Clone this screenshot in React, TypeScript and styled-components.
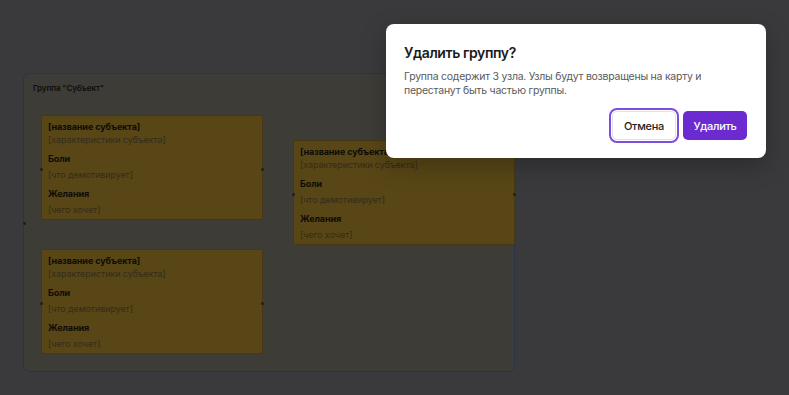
import styled, { createGlobalStyle } from "styled-components";

const GlobalStyle = createGlobalStyle`
  html, body, #root {
    margin: 0;
    padding: 0;
    width: 100%;
    height: 100%;
  }
  body {
    font-family: Inter, "Noto Sans", "Liberation Sans", sans-serif;
    overflow: hidden;
  }
`;

interface NodeData {
  x: number;
  y: number;
}

// positions of the nodes inside the group (canvas coordinates)
const nodes: NodeData[] = [
  { x: 17, y: 41 },
  { x: 269, y: 66 },
  { x: 17, y: 175 },
];

const SubjectCard = ({ x, y }: NodeData) => {
  return (
    <Card style={{ left: x, top: y }}>
      <CardTitle>[название субъекта]</CardTitle>
      <CardHint>[характеристики субъекта]</CardHint>
      <FieldLabel>Боли</FieldLabel>
      <CardHint>[что демотивирует]</CardHint>
      <FieldLabel>Желания</FieldLabel>
      <CardHint>[чего хочет]</CardHint>
      <Handle $side="left" />
      <Handle $side="right" />
    </Card>
  );
};

const App = () => {
  return (
    <>
      <GlobalStyle />
      <Canvas>
        <Group>
          <GroupLabel>Группа "Субъект"</GroupLabel>
          {nodes.map((n, i) => (
            <SubjectCard key={i} x={n.x} y={n.y} />
          ))}
          <GroupHandle />
        </Group>
        <Dialog>
          <DialogTitle>Удалить группу?</DialogTitle>
          <DialogText>
            Группа содержит 3 узла. Узлы будут возвращены на карту и
            перестанут быть частью группы.
          </DialogText>
          <Actions>
            <CancelButton>Отмена</CancelButton>
            <DeleteButton>Удалить</DeleteButton>
          </Actions>
        </Dialog>
      </Canvas>
    </>
  );
};

// canvas is shown already dimmed by the modal backdrop
const Canvas = styled.div`
  position: relative;
  width: 789px;
  height: 395px;
  background-color: rgb(58, 58, 60);
  overflow: hidden;
`;

const Group = styled.div`
  position: absolute;
  left: 23px;
  top: 73px;
  width: 490px;
  height: 297px;
  border: 1px solid rgb(42, 50, 80);
  border-radius: 6px;
  background-color: rgb(62, 60, 55);
`;

const GroupLabel = styled.div`
  padding: 9px 0 0 9px;
  font-size: 8px;
  font-weight: 600;
  letter-spacing: -0.1px;
  color: #0d0d0d;
`;

const GroupHandle = styled.span`
  position: absolute;
  left: -1px;
  top: 148px;
  width: 3px;
  height: 3px;
  border-radius: 50%;
  background-color: #1c1c1c;
`;

const Card = styled.div`
  position: absolute;
  width: 222px;
  height: 105px;
  box-sizing: border-box;
  padding: 4px 6px 5px;
  background-color: rgb(88, 70, 22);
  border: 1px solid rgb(70, 56, 18);
  border-radius: 2px;
  display: flex;
  flex-direction: column;
`;

const CardTitle = styled.div`
  font-size: 9px;
  font-weight: 700;
  letter-spacing: -0.1px;
  color: #0e0c06;
  line-height: 13px;
`;

const CardHint = styled.div`
  font-size: 9px;
  letter-spacing: -0.1px;
  color: rgb(52, 44, 26);
  line-height: 13px;
  margin-bottom: 5px;
`;

const FieldLabel = styled.div`
  font-size: 9px;
  font-weight: 700;
  letter-spacing: -0.1px;
  color: #0e0c06;
  line-height: 13px;
  margin-top: 1px;
  margin-bottom: 3px;
`;

const Handle = styled.span<{ $side: "left" | "right" }>`
  position: absolute;
  top: 50%;
  ${(p) => (p.$side === "left" ? "left: -2px;" : "right: -2px;")}
  width: 3px;
  height: 3px;
  border-radius: 50%;
  background-color: #1e1e1e;
`;

const Dialog = styled.div`
  position: absolute;
  left: 386px;
  top: 24px;
  width: 380px;
  height: 134px;
  box-sizing: border-box;
  padding: 20px 19px 18px 18px;
  background: #fff;
  border-radius: 8px;
  box-shadow: 0 8px 24px rgba(0, 0, 0, 0.25);
  display: flex;
  flex-direction: column;
`;

const DialogTitle = styled.h2`
  margin: 0 0 8px;
  font-size: 14px;
  font-weight: 600;
  letter-spacing: -0.4px;
  color: #1a1a1a;
  line-height: 18px;
`;

const DialogText = styled.p`
  margin: 0;
  font-size: 10.5px;
  letter-spacing: -0.25px;
  line-height: 14px;
  color: #5a5a5a;
`;

const Actions = styled.div`
  display: flex;
  justify-content: flex-end;
  align-items: center;
  gap: 7px;
  margin-top: auto;
`;

const BaseButton = styled.button`
  height: 29px;
  width: 64px;
  padding: 0;
  border-radius: 5px;
  font-family: inherit;
  font-size: 11px;
  font-weight: 500;
  letter-spacing: -0.3px;
  cursor: pointer;
`;

const CancelButton = styled(BaseButton)`
  background: #fff;
  color: #222;
  border: 1px solid #e2e2e2;
  outline: 2px solid #7c4dde;
  outline-offset: 1px;
`;

const DeleteButton = styled(BaseButton)`
  background: #6b2bd0;
  color: #fff;
  border: none;
`;

export default App;
